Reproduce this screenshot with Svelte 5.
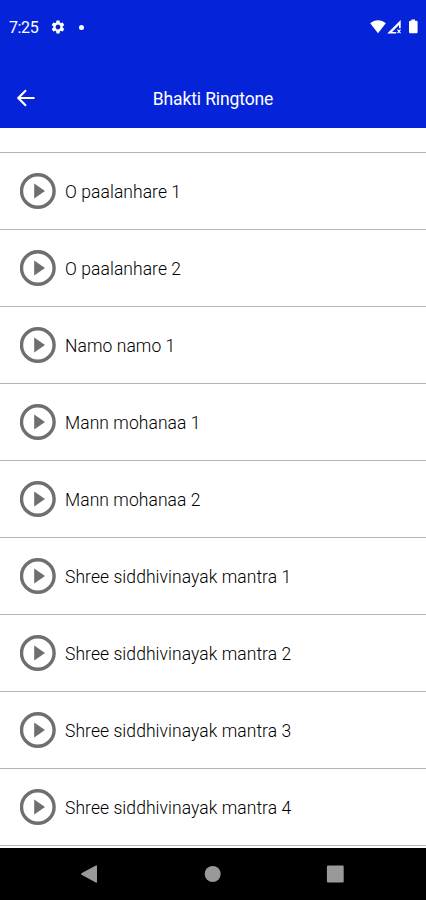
<script>
  let ringtones = [
    'O paalanhare 1',
    'O paalanhare 2',
    'Namo namo 1',
    'Mann mohanaa 1',
    'Mann mohanaa 2',
    'Shree siddhivinayak mantra 1',
    'Shree siddhivinayak mantra 2',
    'Shree siddhivinayak mantra 3',
    'Shree siddhivinayak mantra 4',
  ];
</script>

<div class="screen">
  <header>
    <div class="status">
      <span class="time">7:25</span>
      <svg class="gear" viewBox="0 0 24 24" aria-hidden="true">
        <path
          fill-rule="evenodd"
          d="M19.14 12.94c.04-.3.06-.61.06-.94 0-.32-.02-.64-.07-.94l2.03-1.58c.18-.14.23-.41.12-.61l-1.92-3.32c-.12-.22-.37-.29-.59-.22l-2.39.96c-.5-.38-1.03-.7-1.62-.94l-.36-2.54c-.04-.24-.24-.41-.48-.41h-3.84c-.24 0-.43.17-.47.41l-.36 2.54c-.59.24-1.13.57-1.62.94l-2.39-.96c-.22-.08-.47 0-.59.22L2.74 8.87c-.12.21-.08.47.12.61l2.03 1.58c-.05.3-.09.63-.09.94s.02.64.07.94l-2.03 1.58c-.18.14-.23.41-.12.61l1.92 3.32c.12.22.37.29.59.22l2.39-.96c.5.38 1.03.7 1.62.94l.36 2.54c.05.24.24.41.48.41h3.84c.24 0 .44-.17.47-.41l.36-2.54c.59-.24 1.13-.56 1.62-.94l2.39.96c.22.08.47 0 .59-.22l1.92-3.32c.12-.22.07-.47-.12-.61l-2.01-1.58zM12 15.6c-1.98 0-3.6-1.62-3.6-3.6s1.62-3.6 3.6-3.6 3.6 1.62 3.6 3.6-1.62 3.6-3.6 3.6z"
        />
      </svg>
      <span class="dot"></span>
      <svg class="system" viewBox="0 0 50 18" aria-hidden="true">
        <path d="M0.2 5.3C4.8 1.2 11.2 1.2 15.8 5.3L8 15.2Z" />
        <path
          fill-rule="evenodd"
          d="M30.7 2V10.2H29V7L22 13.9H26.2V15.4H17.2Z"
        />
        <path class="cross" d="M27.5 11.6L30.5 15.2M30.5 11.6L27.5 15.2" />
        <path d="M41.4 1.4H45V2.8H46.3Q47.6 2.8 47.6 4V14Q47.6 15.2 46.3 15.2H40.2Q39 15.2 39 14V4Q39 2.8 40.2 2.8H41.4Z" />
      </svg>
    </div>
    <div class="toolbar">
      <button class="back" type="button" aria-label="Back">
        <svg viewBox="0 0 18 18">
          <path d="M17.5 9H1.5M9 1.3L1.3 9L9 16.7" />
        </svg>
      </button>
      <h1>Bhakti Ringtone</h1>
    </div>
  </header>

  <ul>
    {#each ringtones as name (name)}
      <li>
        <button class="play" type="button" aria-label={`Play ${name}`}>
          <svg viewBox="0 0 36 36">
            <circle cx="17.8" cy="18" r="16.3" />
            <path d="M14.2 10.4L25 18L14.2 25.6Z" />
          </svg>
        </button>
        <span class="name">{name}</span>
      </li>
    {/each}
  </ul>

  <nav>
    <svg viewBox="0 0 18 18" aria-hidden="true">
      <path d="M1.5 8.2L15.8 0.5Q17 0 17 1.2V16.8Q17 18 15.8 17.5L1.5 9.8Q0.5 9 1.5 8.2Z" />
    </svg>
    <svg viewBox="0 0 18 18" aria-hidden="true"><circle cx="9.7" cy="9" r="8" /></svg>
    <svg viewBox="0 0 18 18" aria-hidden="true">
      <rect x="0.9" y="0.6" width="16.8" height="16.8" rx="1.2" />
    </svg>
  </nav>
</div>

<style>
  :global(body) {
    background: #fff;
  }

  .screen {
    display: flex;
    flex-direction: column;
    height: 900px;
    overflow: hidden;
    background: #fff;
    font-family: Roboto, sans-serif;
  }

  header {
    flex: 0 0 128px;
    background: #0524d9;
    color: #fff;
  }

  .status {
    display: flex;
    align-items: center;
    height: 54px;
    padding: 0 6px 0 9px;
    fill: #fff;
  }

  .time {
    width: 41px;
    font-size: 16px;
    letter-spacing: -0.4px;
  }

  .gear {
    width: 16px;
    height: 16px;
  }

  .dot {
    width: 5px;
    height: 5px;
    margin-left: 13px;
    border-radius: 50%;
    background: #fff;
  }

  .system {
    width: 50px;
    height: 18px;
    margin-left: auto;
  }

  .cross {
    fill: none;
    stroke: #fff;
    stroke-width: 1.1;
  }

  .toolbar {
    display: grid;
    grid-template-columns: 52px 1fr 52px;
    align-items: center;
    height: 74px;
  }

  button {
    display: flex;
    padding: 0;
    border: 0;
    background: none;
    cursor: pointer;
  }

  .back {
    margin: 14px 0 0 17px;
  }

  .back svg {
    width: 18px;
    height: 18px;
    fill: none;
    stroke: #fff;
    stroke-width: 2.1;
  }

  h1 {
    margin: 15px 0 0;
    font-size: 17.5px;
    font-weight: 400;
    line-height: 24px;
    letter-spacing: -0.12px;
    text-align: center;
  }

  ul {
    flex: 1;
    min-height: 0;
    margin: 0;
    padding: 24px 0 0;
    list-style: none;
  }

  li {
    display: flex;
    align-items: center;
    box-sizing: border-box;
    height: 77px;
    padding-left: 20px;
    border-top: 1px solid #b5b5b5;
  }

  li:last-child {
    height: 78px;
    border-bottom: 1px solid #b5b5b5;
  }

  .play svg {
    width: 36px;
    height: 36px;
    fill: #6f6f6f;
  }

  .play circle {
    fill: none;
    stroke: #6f6f6f;
    stroke-width: 3.4;
  }

  .name {
    margin-left: 9px;
    padding-top: 2px;
    color: #000;
    font-size: 17.5px;
    font-weight: 300;
    letter-spacing: 0.06px;
    white-space: nowrap;
  }

  nav {
    display: flex;
    flex: 0 0 52px;
    align-items: center;
    justify-content: space-between;
    box-sizing: border-box;
    padding: 0 82px 0 80px;
    background: #000;
    fill: #999;
  }

  nav svg {
    width: 18px;
    height: 18px;
  }
</style>
